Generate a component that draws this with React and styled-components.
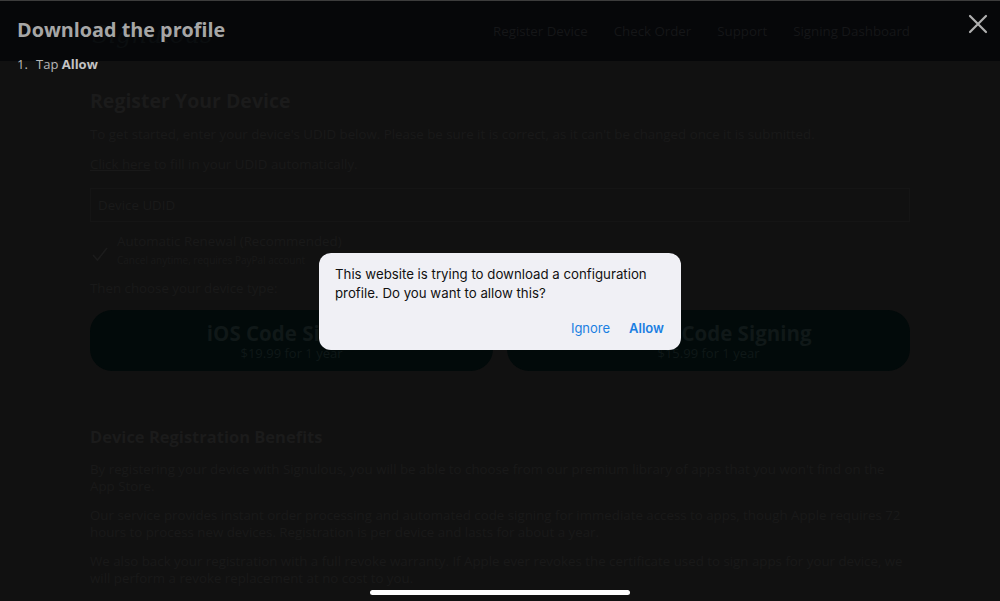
import React from "react";
import styled, { createGlobalStyle } from "styled-components";

const GlobalStyle = createGlobalStyle`
  html, body {
    margin: 0;
    padding: 0;
    background: #111111;
    overflow: hidden;
  }
  * {
    box-sizing: border-box;
  }
`;

const pageFont = `"Open Sans", "Liberation Sans", sans-serif`;
const iosFont = `Inter, "Liberation Sans", sans-serif`;

const App = () => {
  return (
    <>
      <GlobalStyle />
      <Screen>
        <SiteHeader>
          <Logo>Signulous</Logo>
          <Nav>
            <NavLink>Register Device</NavLink>
            <NavLink>Check Order</NavLink>
            <NavLink>Support</NavLink>
            <NavLink>Signing Dashboard</NavLink>
          </Nav>
        </SiteHeader>

        <Main>
          <Heading>Register Your Device</Heading>
          <Text>
            To get started, enter your device's UDID below. Please be sure it is correct, as it
            can't be changed once it is submitted.
          </Text>
          <Text>
            <u>Click here</u> to fill in your UDID automatically.
          </Text>
          <UdidInput>Device UDID</UdidInput>
          <RenewalRow>
            <svg width="18" height="16" viewBox="0 0 18 16">
              <path d="M2 9 L6.5 14 L16 2" fill="none" stroke="#1c1c1c" strokeWidth="1.5" />
            </svg>
            <div>
              <RenewalLabel>Automatic Renewal (Recommended)</RenewalLabel>
              <RenewalNote>Cancel anytime, requires PayPal account</RenewalNote>
            </div>
          </RenewalRow>
          <Text>Then choose your device type:</Text>
          <PlanGrid>
            <PlanButton>
              <PlanName>iOS Code Signing</PlanName>
              <PlanPrice>$19.99 for 1 year</PlanPrice>
            </PlanButton>
            <PlanButton>
              <PlanName>macOS Code Signing</PlanName>
              <PlanPrice>$15.99 for 1 year</PlanPrice>
            </PlanButton>
          </PlanGrid>

          <SubHeading>Device Registration Benefits</SubHeading>
          <Text $tight>
            By registering your device with Signulous, you will be able to choose from our premium
            library of apps that you won't find on the App Store.
          </Text>
          <Text $tight>
            Our service provides instant order processing and automated code signing for immediate
            access to apps, though Apple requires 72 hours to process new devices. Registration is
            per device and lasts for about a year.
          </Text>
          <Text $tight>
            We also back your registration with a full revoke warranty. If Apple ever revokes the
            certificate used to sign apps for your device, we will perform a revoke replacement at
            no cost to you.
          </Text>
        </Main>

        {/* overlay: profile download sheet */}
        <Instructions>
          <InstructionTitle>Download the profile</InstructionTitle>
          <Steps>
            <Step>
              <StepNumber>1.</StepNumber>
              <span>
                Tap <b>Allow</b>
              </span>
            </Step>
          </Steps>
        </Instructions>
        <CloseButton aria-label="Close">
          <svg width="20" height="20" viewBox="0 0 20 20">
            <path d="M2 2 L18 18 M18 2 L2 18" stroke="#b0b0b0" strokeWidth="2.2" strokeLinecap="round" />
          </svg>
        </CloseButton>

        <Alert>
          <AlertMessage>
            This website is trying to download a configuration profile. Do you want to allow this?
          </AlertMessage>
          <AlertActions>
            <AlertAction>Ignore</AlertAction>
            <AlertAction $primary>Allow</AlertAction>
          </AlertActions>
        </Alert>

        <HomeIndicator />
      </Screen>
    </>
  );
};

export default App;

const Screen = styled.div`
  position: relative;
  width: 1000px;
  height: 601px;
  overflow: hidden;
  background: #111111;
  border-top: 1px solid #3c3c3c;
  font-family: ${pageFont};
`;

const SiteHeader = styled.header`
  height: 60px;
  background: #060709;
  display: flex;
  align-items: center;
  justify-content: space-between;
  padding: 0 90px 0 92px;
`;

const Logo = styled.div`
  font-family: "DejaVu Serif", serif;
  font-style: italic;
  font-size: 24px;
  color: #0b0e10;
  margin-top: 8px;
`;

const Nav = styled.nav`
  display: flex;
  gap: 26px;
  margin-bottom: 1px;
`;

const NavLink = styled.span`
  font-size: 13.3px;
  color: #151618;
`;

const Main = styled.main`
  padding: 27px 90px 0;
  color: #191919;
`;

const Heading = styled.h1`
  margin: 0 0 12px;
  font-size: 19.5px;
  font-weight: 700;
  line-height: 26px;
  color: #1b1b1b;
`;

const SubHeading = styled.h2`
  margin: 55px 0 12.5px;
  font-size: 16.5px;
  font-weight: 700;
  line-height: 22px;
  color: #1b1b1b;
`;

const Text = styled.p`
  margin: 0 0 ${(p) => (p.$tight ? 12 : 13)}px;
  font-size: 13.3px;
  line-height: 17px;

  u {
    text-decoration: underline;
  }
`;

const UdidInput = styled.div`
  height: 34px;
  border: 1px solid #151515;
  padding: 0 7px;
  display: flex;
  align-items: center;
  font-size: 13.3px;
  color: #1a1a1a;
  margin: 14.5px 0 11.5px;
`;

const RenewalRow = styled.div`
  display: flex;
  align-items: center;
  gap: 8px;
  margin-bottom: 13.5px;
  padding-left: 1px;

  svg {
    margin-top: 8px;
  }
`;

const RenewalLabel = styled.div`
  font-size: 13.3px;
  line-height: 17px;
`;

const RenewalNote = styled.div`
  font-size: 10px;
  line-height: 14px;
  margin-top: 2.5px;
`;

const PlanGrid = styled.div`
  display: grid;
  grid-template-columns: 1fr 1fr;
  gap: 14px;
`;

const PlanButton = styled.div`
  height: 61px;
  border-radius: 22px;
  background: #020a0a;
  display: flex;
  flex-direction: column;
  align-items: center;
  justify-content: center;
  padding-top: 2px;
`;

const PlanName = styled.div`
  font-size: 20.5px;
  font-weight: 700;
  line-height: 24px;
  color: #101818;
`;

const PlanPrice = styled.div`
  font-size: 13px;
  line-height: 17px;
  color: #0f1818;
`;

const Instructions = styled.div`
  position: absolute;
  top: 15px;
  left: 17px;
`;

const InstructionTitle = styled.h1`
  margin: 0;
  font-size: 19.8px;
  font-weight: 700;
  line-height: 28px;
  color: #a6a6a6;
`;

const Steps = styled.ol`
  list-style: none;
  margin: 12px 0 0;
  padding: 0;
  font-size: 13px;
  line-height: 17px;
  color: #b8b8b8;

  b {
    font-weight: 700;
    color: #c4c4c4;
  }
`;

const Step = styled.li`
  display: flex;
`;

const StepNumber = styled.span`
  width: 19px;
`;

const CloseButton = styled.div`
  position: absolute;
  top: 13px;
  right: 12px;
  width: 20px;
  height: 20px;
  display: flex;
`;

const Alert = styled.div`
  position: absolute;
  left: 319px;
  top: 252px;
  width: 362px;
  height: 97px;
  background: #f0f0f5;
  border-radius: 12px;
  padding: 12px 17px 0 16px;
  font-family: ${iosFont};
  display: flex;
  flex-direction: column;
`;

const AlertMessage = styled.div`
  font-size: 13.25px;
  line-height: 19px;
  color: #111111;
`;

const AlertActions = styled.div`
  display: flex;
  justify-content: flex-end;
  gap: 19px;
  margin-top: 16px;
`;

const AlertAction = styled.span`
  font-size: 13px;
  line-height: 18px;
  color: #1a7fe2;
  font-weight: ${(p) => (p.$primary ? 600 : 400)};
`;

const HomeIndicator = styled.div`
  position: absolute;
  left: 370px;
  bottom: 6px;
  width: 260px;
  height: 5px;
  border-radius: 3px;
  background: #ffffff;
`;
